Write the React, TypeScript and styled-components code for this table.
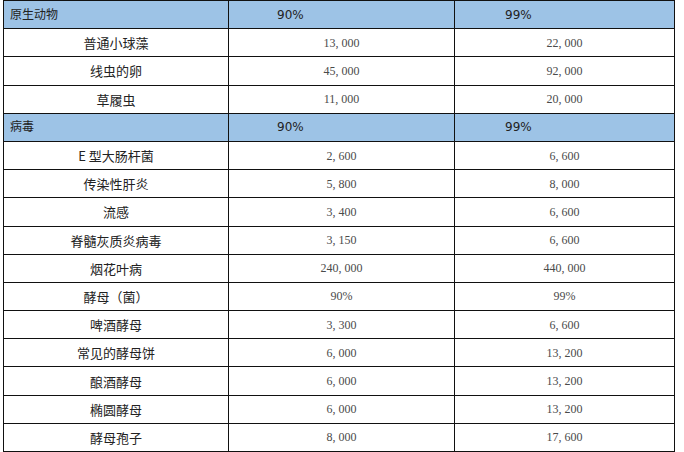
import React from "react";
import styled, { createGlobalStyle } from "styled-components";

const Global = createGlobalStyle`
  html, body { margin: 0; padding: 0; background: #ffffff; }
  body { font-family: "Noto Sans CJK SC", "Noto Sans", sans-serif; }
`;

const Page = styled.div`
  width: 684px;
  height: 452px;
  padding-left: 3px;
  box-sizing: border-box;
  overflow: hidden;
  background: #fff;
`;

const Table = styled.div`
  display: grid;
  grid-template-columns: 224px 225px 219px;
  grid-template-rows: repeat(16, 1fr);
  gap: 1px;
  padding: 1px;
  box-sizing: border-box;
  width: 672px;
  height: 452px;
  background: #111;
`;

const Cell = styled.div`
  display: flex;
  align-items: center;
  justify-content: center;
  background: #ffffff;
  color: #222;
  font-family: "Noto Sans CJK SC", sans-serif;
  font-size: 13px;
  white-space: nowrap;
  line-height: 1;
`;

const NumCell = styled(Cell)`
  color: #4a4a4a;
  font-family: "Liberation Serif", "Noto Sans CJK SC", serif;
  font-size: 12px;
`;

const HeadCell = styled(Cell)<{ $pad: number }>`
  justify-content: flex-start;
  padding-left: ${(p) => p.$pad}px;
  background: #9dc3e6;
  color: #222;
  font-family: "DejaVu Sans", "Noto Sans CJK SC", sans-serif;
  font-size: 12px;
`;

type Group = { title: string; rows: [string, string, string][] };

const groups: Group[] = [
  {
    title: "原生动物",
    rows: [
      ["普通小球藻", "13, 000", "22, 000"],
      ["线虫的卵", "45, 000", "92, 000"],
      ["草履虫", "11, 000", "20, 000"],
    ],
  },
  {
    title: "病毒",
    rows: [
      ["E 型大肠杆菌", "2, 600", "6, 600"],
      ["传染性肝炎", "5, 800", "8, 000"],
      ["流感", "3, 400", "6, 600"],
      ["脊髓灰质炎病毒", "3, 150", "6, 600"],
      ["烟花叶病", "240, 000", "440, 000"],
      ["酵母（菌）", "90%", "99%"],
      ["啤酒酵母", "3, 300", "6, 600"],
      ["常见的酵母饼", "6, 000", "13, 200"],
      ["酿酒酵母", "6, 000", "13, 200"],
      ["椭圆酵母", "6, 000", "13, 200"],
      ["酵母孢子", "8, 000", "17, 600"],
    ],
  },
];

export default function App() {
  return (
    <>
      <Global />
      <Page>
        <Table>
          {groups.map((g) => (
            <React.Fragment key={g.title}>
              <HeadCell $pad={6}>{g.title}</HeadCell>
              <HeadCell $pad={48}>90%</HeadCell>
              <HeadCell $pad={50}>99%</HeadCell>
              {g.rows.map((r) => (
                <React.Fragment key={r[0]}>
                  <Cell>{r[0]}</Cell>
                  <NumCell>{r[1]}</NumCell>
                  <NumCell>{r[2]}</NumCell>
                </React.Fragment>
              ))}
            </React.Fragment>
          ))}
        </Table>
      </Page>
    </>
  );
}
